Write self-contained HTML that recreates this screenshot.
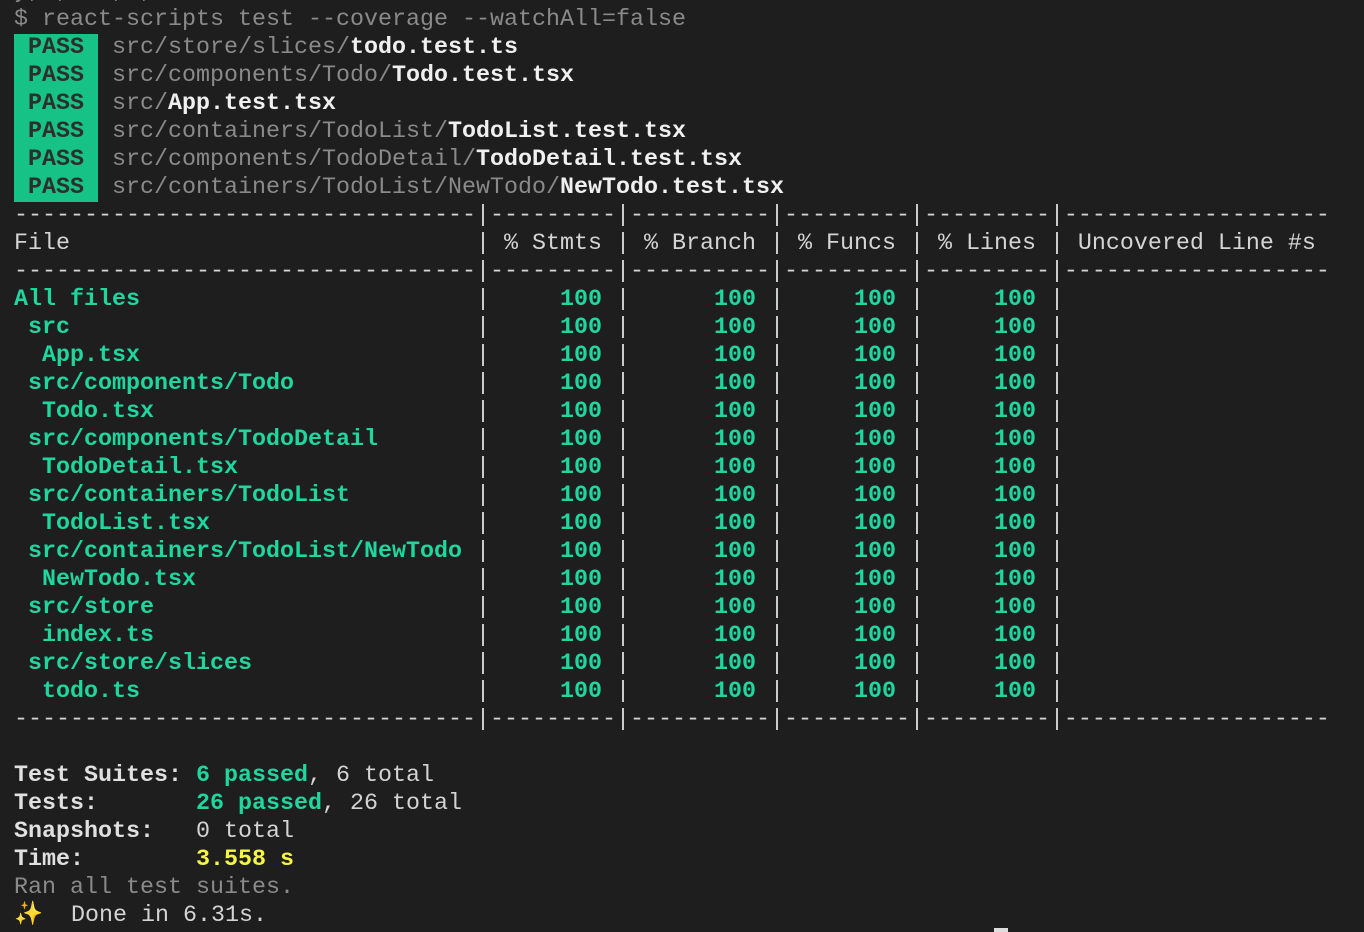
<!DOCTYPE html>
<html><head><meta charset="utf-8"><style>
html,body{margin:0;padding:0;background:#1e1e1e;width:1364px;height:932px;overflow:hidden}
pre{margin:0;position:absolute;left:14px;top:-22px;font-family:"Liberation Mono","DejaVu Sans Mono",monospace;font-size:23.33px;line-height:28px;color:#d4d4d4;white-space:pre}
.g{color:#8a8a8a}.w{color:#f0f0f0;font-weight:bold}
.p{background:#16c285;color:#2e2e2e;font-weight:bold;display:inline-block;height:28px}
.n{color:#1fd69d;font-weight:bold}.y{color:#f5f543;font-weight:bold}.b{font-weight:bold;color:#e0e0e0}
.cur{position:absolute;left:994px;top:928px;width:14px;height:4px;background:#ddd}
</style></head><body>
<pre><span class="g">y, ,   , ,</span>
<span class="g">$ react-scripts test --coverage --watchAll=false</span>
<span class="p"> PASS </span> <span class="g">src/store/slices/</span><span class="w">todo.test.ts</span>
<span class="p"> PASS </span> <span class="g">src/components/Todo/</span><span class="w">Todo.test.tsx</span>
<span class="p"> PASS </span> <span class="g">src/</span><span class="w">App.test.tsx</span>
<span class="p"> PASS </span> <span class="g">src/containers/TodoList/</span><span class="w">TodoList.test.tsx</span>
<span class="p"> PASS </span> <span class="g">src/components/TodoDetail/</span><span class="w">TodoDetail.test.tsx</span>
<span class="p"> PASS </span> <span class="g">src/containers/TodoList/NewTodo/</span><span class="w">NewTodo.test.tsx</span>
---------------------------------|---------|----------|---------|---------|-------------------
File                             | % Stmts | % Branch | % Funcs | % Lines | Uncovered Line #s
---------------------------------|---------|----------|---------|---------|-------------------
<span class="n">All files                       </span> | <span class="n">    100</span> | <span class="n">     100</span> | <span class="n">    100</span> | <span class="n">    100</span> |
<span class="n"> src                            </span> | <span class="n">    100</span> | <span class="n">     100</span> | <span class="n">    100</span> | <span class="n">    100</span> |
<span class="n">  App.tsx                       </span> | <span class="n">    100</span> | <span class="n">     100</span> | <span class="n">    100</span> | <span class="n">    100</span> |
<span class="n"> src/components/Todo            </span> | <span class="n">    100</span> | <span class="n">     100</span> | <span class="n">    100</span> | <span class="n">    100</span> |
<span class="n">  Todo.tsx                      </span> | <span class="n">    100</span> | <span class="n">     100</span> | <span class="n">    100</span> | <span class="n">    100</span> |
<span class="n"> src/components/TodoDetail      </span> | <span class="n">    100</span> | <span class="n">     100</span> | <span class="n">    100</span> | <span class="n">    100</span> |
<span class="n">  TodoDetail.tsx                </span> | <span class="n">    100</span> | <span class="n">     100</span> | <span class="n">    100</span> | <span class="n">    100</span> |
<span class="n"> src/containers/TodoList        </span> | <span class="n">    100</span> | <span class="n">     100</span> | <span class="n">    100</span> | <span class="n">    100</span> |
<span class="n">  TodoList.tsx                  </span> | <span class="n">    100</span> | <span class="n">     100</span> | <span class="n">    100</span> | <span class="n">    100</span> |
<span class="n"> src/containers/TodoList/NewTodo</span> | <span class="n">    100</span> | <span class="n">     100</span> | <span class="n">    100</span> | <span class="n">    100</span> |
<span class="n">  NewTodo.tsx                   </span> | <span class="n">    100</span> | <span class="n">     100</span> | <span class="n">    100</span> | <span class="n">    100</span> |
<span class="n"> src/store                      </span> | <span class="n">    100</span> | <span class="n">     100</span> | <span class="n">    100</span> | <span class="n">    100</span> |
<span class="n">  index.ts                      </span> | <span class="n">    100</span> | <span class="n">     100</span> | <span class="n">    100</span> | <span class="n">    100</span> |
<span class="n"> src/store/slices               </span> | <span class="n">    100</span> | <span class="n">     100</span> | <span class="n">    100</span> | <span class="n">    100</span> |
<span class="n">  todo.ts                       </span> | <span class="n">    100</span> | <span class="n">     100</span> | <span class="n">    100</span> | <span class="n">    100</span> |
---------------------------------|---------|----------|---------|---------|-------------------

<span class="b">Test Suites: </span><span class="n">6 passed</span>, 6 total
<span class="b">Tests:       </span><span class="n">26 passed</span>, 26 total
<span class="b">Snapshots:   </span>0 total
<span class="b">Time:        </span><span class="y">3.558 s</span>
<span class="g">Ran all test suites.</span>
<span style="color:#f5c542">✨</span>  Done in 6.31s.</pre>
<div class="cur"></div>
</body></html>
